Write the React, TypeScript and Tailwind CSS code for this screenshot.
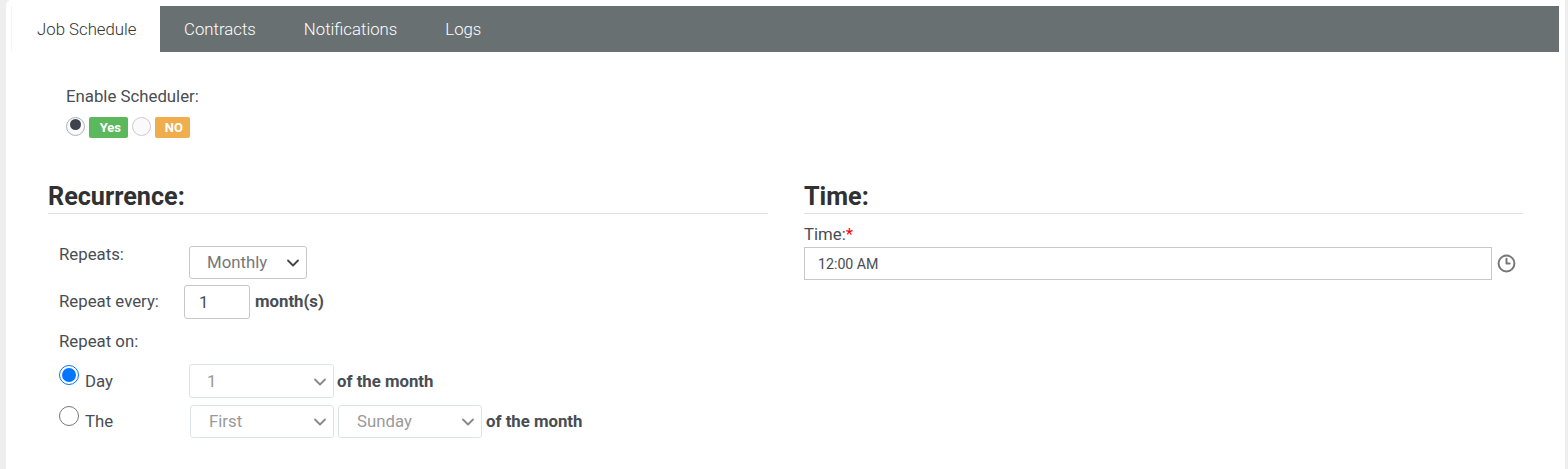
import { ChevronDown, Clock3 } from "lucide-react";

const tabs = ["Contracts", "Notifications", "Logs"];

function FakeSelect({
  value,
  className,
  muted,
}: {
  value: string;
  className: string;
  muted?: boolean;
}) {
  return (
    <div
      className={`flex items-center justify-between rounded-[3px] border bg-white pr-[3px] ${
        muted
          ? "border-[#dee2eb] text-[#9a9a9a]"
          : "border-[#c8c8c8] text-[#777777]"
      } ${className}`}
    >
      <span>{value}</span>
      <ChevronDown
        size={20}
        strokeWidth={2.2}
        className={muted ? "text-[#888888]" : "text-[#444444]"}
      />
    </div>
  );
}

function Radio({ checked }: { checked?: boolean }) {
  return (
    <span
      className={`mt-px flex h-5 w-5 shrink-0 items-center justify-center rounded-full border-[1.5px] bg-white ${
        checked ? "border-[#0075ff]" : "border-[#767676]"
      }`}
    >
      {checked && <span className="h-[14px] w-[14px] rounded-full bg-[#0075ff]" />}
    </span>
  );
}

function ToggleRadio({ checked }: { checked?: boolean }) {
  return (
    <span
      className={`mb-[2px] flex h-[19px] w-[19px] items-center justify-center rounded-full border bg-[#fafafa] ${
        checked ? "border-[#aab2c0]" : "border-[#c8ccd2]"
      }`}
    >
      {checked && <span className="mb-[4px] h-[11px] w-[11px] rounded-full bg-[#3d444d]" />}
    </span>
  );
}

function Badge({ label, className }: { label: string; className: string }) {
  return (
    <span
      className={`flex h-[21px] items-center justify-end rounded-[2px] text-[13px] font-bold text-white ${className}`}
    >
      {label}
    </span>
  );
}

export default function App() {
  return (
    <div className="h-[469px] w-full overflow-hidden bg-[#eeeeee] pl-[6px] pr-[3px] font-['Roboto',sans-serif] text-[16.8px] text-[#484d53]">
      <div className="h-full rounded-tl-[5px] bg-white pr-[6px] pt-[6px]">
        <div className="flex h-[46px]">
          <div className="ml-[5px] flex w-[149px] items-center border-l border-[#f5f5f5] pl-[25px] pt-[1px] font-light text-[#333333]">
            Job Schedule
          </div>
          <div className="flex flex-1 items-center gap-12 bg-[#697072] pl-6 pt-[1px] font-light text-white">
            {tabs.map((tab) => (
              <span key={tab}>{tab}</span>
            ))}
          </div>
        </div>

        <div className="pl-[60px] pt-[34px]">
          <div className="leading-5">Enable Scheduler:</div>
          <div className="mt-[11px] flex items-center gap-1">
            <ToggleRadio checked />
            <Badge label="Yes" className="w-[39px] bg-[#5cb85c] pr-[7px]" />
            <ToggleRadio />
            <Badge label="NO" className="w-[35px] bg-[#f0ad4e] pr-[7px]" />
          </div>
        </div>

        <div className="mt-[44px] grid grid-cols-[720px_719px] gap-9 pl-[42px]">
          <section>
            <h2 className="border-b border-[#e2e2e2] pb-[2px] text-[25.2px] leading-[29px] font-bold text-[#2f3133]">
              Recurrence:
            </h2>
            <div className="pl-[11px] pt-[32px]">
              <div className="flex h-[33px]">
                <span className="w-[130px] leading-[17px]">Repeats:</span>
                <FakeSelect value="Monthly" className="h-[33px] w-[118px] pl-[17px]" />
              </div>
              <div className="mt-[6px] flex h-[34px] items-center">
                <span className="w-[125px]">Repeat every:</span>
                <input
                  readOnly
                  value="1"
                  className="h-[34px] w-[66px] rounded-[3px] border border-[#c8c8c8] pl-[14px] text-[#484d53] outline-none"
                />
                <b className="ml-[5px]">month(s)</b>
              </div>
              <div className="mt-[12px] leading-5">Repeat on:</div>
              <div className="mt-[13px] flex h-[34px] items-center">
                <div className="flex w-[130px] items-start gap-[6px] self-start">
                  <Radio checked />
                  <span className="mt-[5px]">Day</span>
                </div>
                <FakeSelect muted value="1" className="h-[34px] w-[145px] pl-[17px] pt-px" />
                <b className="ml-[3px] mt-px">of the month</b>
              </div>
              <div className="mt-[7px] flex h-[33px] items-center">
                <div className="flex w-[131px] items-start gap-[6px] self-start">
                  <Radio />
                  <span className="mt-[4px]">The</span>
                </div>
                <FakeSelect muted value="First" className="h-[33px] w-[144px] pl-[18px]" />
                <FakeSelect muted value="Sunday" className="ml-[4px] h-[33px] w-[144px] pl-[18px]" />
                <b className="ml-[4px]">of the month</b>
              </div>
            </div>
          </section>

          <section>
            <h2 className="border-b border-[#e2e2e2] pb-[2px] text-[25.2px] leading-[29px] font-bold text-[#2f3133]">
              Time:
            </h2>
            <div className="mt-[10px] leading-5">
              Time:<span className="text-[#ff0000]">*</span>
            </div>
            <div className="mt-[3px] flex items-center">
              <input
                readOnly
                value="12:00 AM"
                className="h-[33px] w-[688px] border border-[#c8c8c8] pl-[13px] text-[14.2px] text-[#484d53] outline-none"
              />
              <Clock3 size={19} strokeWidth={2.5} className="ml-[5px] text-[#777777]" />
            </div>
          </section>
        </div>
      </div>
    </div>
  );
}
